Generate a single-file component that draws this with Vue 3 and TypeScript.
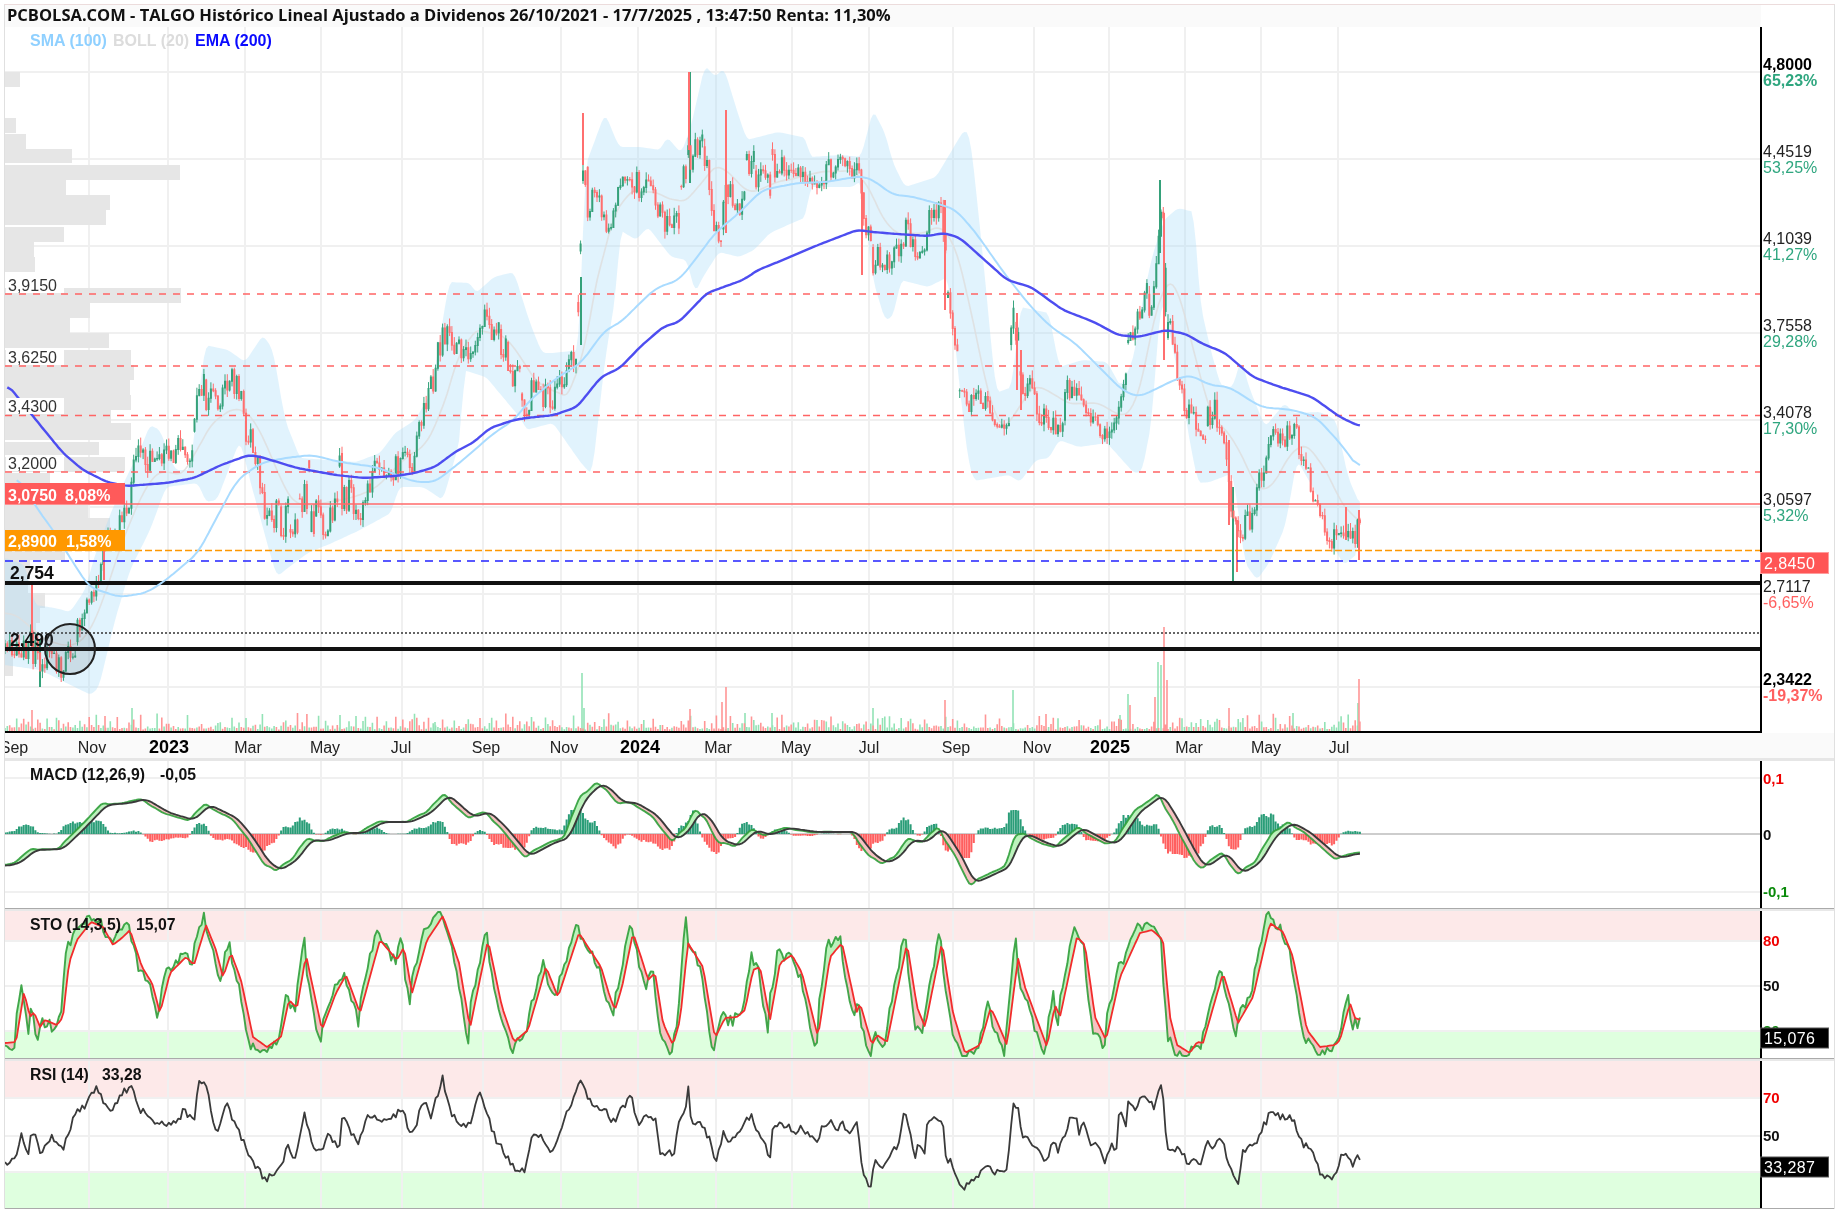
<script setup lang="ts">
type P = [number, number];
type Env = [number, number, number];

let seed = 20211026;
const rnd = (): number => {
  seed = (seed * 1664525 + 1013904223) >>> 0;
  return seed / 4294967296;
};
const sorted = <T extends number[]>(a: T[]): T[] => [...a].sort((p, q) => p[0] - q[0]);
const interp = (pts: P[], x: number): number => {
  if (x <= pts[0][0]) return pts[0][1];
  for (let i = 1; i < pts.length; i++) {
    if (x <= pts[i][0]) {
      const [x0, y0] = pts[i - 1];
      const [x1, y1] = pts[i];
      return y0 + ((y1 - y0) * (x - x0)) / Math.max(x1 - x0, 0.001);
    }
  }
  return pts[pts.length - 1][1];
};
const STEP = 2.34;
const END = 1361;
const xs: number[] = [];
for (let x = 5; x <= END; x += STEP) xs.push(+x.toFixed(2));
const smooth = (a: number[], w: number): number[] =>
  a.map((_, i) => {
    let s = 0;
    let n = 0;
    for (let j = Math.max(0, i - w); j <= Math.min(a.length - 1, i + w); j++) {
      s += a[j];
      n++;
    }
    return s / n;
  });
const path = (x: number[], y: number[]): string =>
  x.map((v, i) => `${i ? 'L' : 'M'}${v.toFixed(1)} ${y[i].toFixed(1)}`).join('');

/* ---------- grid ---------- */
const vGrid = [89, 168, 245, 321, 402, 483, 561, 638, 716, 792, 869, 953, 1034, 1109, 1185, 1261, 1338];
const hGrid = [72, 159, 246, 333, 420, 507, 594, 687];

/* ---------- price axis ---------- */
const axis = [
  { y: 72, p: '4,8000', c: '65,23%', bold: true, up: true },
  { y: 159, p: '4,4519', c: '53,25%', bold: false, up: true },
  { y: 246, p: '4,1039', c: '41,27%', bold: false, up: true },
  { y: 333, p: '3,7558', c: '29,28%', bold: false, up: true },
  { y: 420, p: '3,4078', c: '17,30%', bold: false, up: true },
  { y: 507, p: '3,0597', c: '5,32%', bold: false, up: true },
  { y: 594, p: '2,7117', c: '-6,65%', bold: false, up: false },
  { y: 687, p: '2,3422', c: '-19,37%', bold: true, up: false }
];
const months = [
  { x: 14, t: 'Sep' }, { x: 92, t: 'Nov' }, { x: 169, t: '2023', y: true }, { x: 248, t: 'Mar' },
  { x: 325, t: 'May' }, { x: 401, t: 'Jul' }, { x: 486, t: 'Sep' }, { x: 564, t: 'Nov' },
  { x: 640, t: '2024', y: true }, { x: 718, t: 'Mar' }, { x: 796, t: 'May' }, { x: 869, t: 'Jul' },
  { x: 956, t: 'Sep' }, { x: 1037, t: 'Nov' }, { x: 1110, t: '2025', y: true }, { x: 1189, t: 'Mar' },
  { x: 1266, t: 'May' }, { x: 1339, t: 'Jul' }
];

/* ---------- volume profile: top, bottom, right ---------- */
const profile: [number, number, number][] = [
  [72, 87, 20], [118, 133, 16], [134, 149, 26], [149, 163, 72], [165, 180, 180], [180, 195, 66],
  [195, 210, 110], [210, 225, 106], [227, 242, 64], [242, 257, 34], [257, 272, 35], [288, 303, 181],
  [303, 318, 90], [318, 333, 70], [333, 348, 109], [350, 365, 131], [365, 380, 134], [380, 395, 130],
  [395, 410, 131], [410, 423, 111], [423, 440, 131], [442, 455, 99], [457, 472, 125], [473, 483, 50],
  [505, 518, 88], [518, 530, 110], [545, 560, 65], [560, 578, 30], [578, 593, 28], [593, 608, 45],
  [608, 623, 40], [623, 640, 36], [640, 655, 20], [655, 676, 13]
];

/* ---------- price envelope ---------- */
const env: Env[] = [
  [6,640,665],[15,635,675],[25,620,660],[32,630,675],[40,640,687],[50,645,680],[63,650,682],[72,625,665],[79,605,650],
  [86,590,625],[91,570,600],[98,555,595],[104,530,565],[112,525,560],[122,495,540],[130,440,510],[134,440,480],[150,440,475],
  [165,445,470],[178,435,465],[186,432,470],[193,435,465],[197,380,425],[207,365,430],[218,375,425],[230,365,410],[240,375,420],
  [247,420,470],[255,430,480],[261,470,510],[269,490,545],[285,500,540],[300,485,535],[308,450,530],[316,490,540],[324,500,545],
  [332,480,525],[340,445,530],[348,470,520],[356,495,525],[362,505,520],[372,455,490],[385,450,490],[395,450,480],[405,445,490],
  [411,450,490],[416,420,470],[425,385,420],[432,370,410],[437,335,380],[445,302,360],[452,335,380],[462,333,365],[474,340,365],
  [486,290,340],[498,310,350],[510,340,385],[520,365,420],[526,385,425],[538,355,410],[547,375,410],[553,380,420],[565,360,395],
  [577,325,370],[583,150,195],[590,175,235],[597,195,225],[605,195,235],[612,195,240],[620,177,203],[632,150,193],[640,165,205],
  [652,160,187],[660,193,237],[671,220,240],[681,180,230],[688,125,183],[695,120,163],[703,127,160],[715,210,247],[722,200,250],
  [726,160,233],[735,203,217],[742,193,217],[746,143,190],[755,145,195],[766,177,237],[772,145,200],[778,143,173],[790,160,177],
  [806,170,183],[820,180,190],[824,160,185],[843,150,173],[853,170,180],[859,157,183],[862,183,203],[864,215,277],[873,223,280],
  [881,257,273],[893,247,270],[900,235,265],[907,190,237],[915,250,277],[924,250,273],[928,187,250],[932,205,235],[940,187,207],
  [945,200,290],[948,277,300],[956,327,360],[960,383,413],[976,390,413],[988,390,413],[996,413,427],[1005,427,443],[1009,397,427],
  [1012,293,323],[1017,313,350],[1021,350,393],[1035,387,413],[1047,407,440],[1059,407,440],[1069,373,417],[1077,367,393],[1091,407,423],
  [1104,423,443],[1114,423,433],[1120,363,413],[1126,343,387],[1132,323,347],[1142,287,327],[1154,270,323],[1160,205,253],[1164,213,280],
  [1168,290,360],[1177,360,380],[1185,380,427],[1193,407,437],[1203,437,460],[1209,393,437],[1221,400,437],[1229,440,510],[1233,490,580],
  [1237,527,563],[1247,497,533],[1253,505,530],[1257,470,507],[1265,450,470],[1271,427,447],[1285,427,457],[1293,410,450],[1304,447,467],
  [1312,477,503],[1320,500,520],[1328,520,550],[1336,527,550],[1346,507,537],[1352,530,550],[1359,510,560]
];
const spikes: [number, number, number, 'g' | 'r'][] = [
  [32,583,650,'r'],[40,640,687,'g'],[104,530,580,'r'],[581,277,345,'g'],[583,113,165,'r'],[689,72,150,'r'],[690,72,183,'g'],
  [726,110,233,'r'],[862,180,275,'r'],[945,200,310,'r'],[1017,313,390,'r'],[1021,350,410,'r'],[1160,180,253,'g'],[1164,213,360,'r'],
  [1229,440,525,'r'],[1233,487,583,'g'],[1237,520,572,'r'],[1346,507,540,'r'],[1359,510,560,'r']
];
const topPts: P[] = env.map((e) => [e[0], e[1]]);
const botPts: P[] = env.map((e) => [e[0], e[2]]);
let gBody = '', rBody = '', gWick = '', rWick = '';
let prevY = 650;
let prevF = 0.5;
xs.forEach((x) => {
  const t = interp(topPts, x);
  const b = interp(botPts, x);
  const f = 0.15 * prevF + 0.85 * rnd();
  const c = t + (b - t) * f;
  const o = Math.abs(prevY - c) > 30 ? t + (b - t) * rnd() : prevY;
  const hi = Math.min(o, c) - rnd() * 8;
  const lo = Math.max(o, c) + rnd() * 8;
  const bodyT = Math.min(o, c);
  const bodyB = Math.max(o, c) + 1;
  const up = c < o;
  const xx = x.toFixed(1);
  const w = `M${xx} ${hi.toFixed(1)}V${lo.toFixed(1)}`;
  const bd = `M${xx} ${bodyT.toFixed(1)}V${bodyB.toFixed(1)}`;
  if (up) { gWick += w; gBody += bd; } else { rWick += w; rBody += bd; }
  prevY = c;
  prevF = f;
});
spikes.forEach((s) => {
  const d = `M${s[0]} ${s[1]}V${s[2]}`;
  if (s[3] === 'g') gBody += d; else rBody += d;
});

/* ---------- Bollinger bands ---------- */
const upperPts: P[] = sorted<P>([
  [5,558],[25,565],[35,605],[55,608],[70,612],[85,590],[95,555],[110,515],[125,480],[140,450],[150,425],[160,430],[175,470],[190,470],
  [196,420],[205,345],[228,350],[245,362],[263,335],[273,350],[285,420],[300,458],[356,462],[380,453],[395,433],[415,420],[431,393],
  [449,282],[470,283],[476,293],[494,277],[514,272],[530,323],[542,353],[553,353],[579,350],[585,167],[605,113],[619,147],[640,147],
  [660,150],[667,137],[681,153],[690,130],[705,65],[715,77],[724,68],[739,117],[747,140],[778,132],[806,138],[810,157],[841,155],
  [861,157],[873,110],[885,133],[893,163],[905,187],[936,177],[964,130],[970,135],[980,227],[996,393],[1012,387],[1020,307],[1049,313],
  [1059,367],[1083,360],[1107,362],[1121,387],[1134,357],[1142,303],[1152,257],[1164,220],[1178,208],[1194,212],[1200,303],[1210,347],
  [1221,387],[1233,387],[1241,358],[1249,387],[1265,427],[1285,403],[1293,413],[1320,412],[1336,420],[1348,477],[1361,507]
]);
const lowerPts: P[] = sorted<P>([
  [5,665],[40,670],[91,695],[99,687],[115,620],[130,570],[150,530],[166,487],[198,483],[206,502],[217,500],[240,440],[250,480],
  [269,550],[277,577],[285,570],[308,553],[332,543],[360,530],[391,513],[399,487],[423,487],[443,500],[461,437],[463,370],[486,377],
  [522,420],[526,430],[553,423],[581,463],[592,475],[605,360],[616,293],[620,230],[636,240],[648,227],[671,257],[687,260],[695,293],
  [703,277],[719,252],[739,257],[754,250],[770,233],[806,217],[810,187],[853,187],[861,180],[873,280],[885,320],[893,317],[901,280],
  [928,287],[948,277],[960,390],[968,460],[974,481],[1009,475],[1020,482],[1036,460],[1049,458],[1059,440],[1079,447],[1107,443],
  [1134,473],[1142,472],[1152,420],[1156,360],[1162,293],[1172,345],[1182,393],[1190,443],[1198,483],[1210,482],[1233,473],[1245,563],
  [1257,580],[1269,563],[1285,527],[1297,460],[1316,493],[1328,537],[1344,565],[1358,553],[1361,510]
]);
const bx = xs;
const upper = smooth(bx.map((x) => interp(upperPts, x)), 1);
const lower = smooth(bx.map((x) => Math.max(interp(lowerPts, x), interp(upperPts, x) + 4)), 1);
const bandD =
  path(bx, upper) +
  [...bx].reverse().map((x, i) => `L${x.toFixed(1)} ${lower[bx.length - 1 - i].toFixed(1)}`).join('') + 'Z';
const midD = path(bx, smooth(upper.map((u, i) => (u + lower[i]) / 2), 6));

/* ---------- moving averages ---------- */
const smaPts: P[] = sorted<P>([
  [16,473],[36,507],[55,533],[67,553],[89,587],[119,597],[146,593],[166,580],[198,553],[217,517],[237,480],[261,463],[285,458],[312,455],
  [340,462],[376,467],[415,482],[435,482],[463,460],[494,433],[514,420],[530,400],[558,377],[581,363],[605,330],[620,323],[640,303],
  [656,288],[679,280],[695,260],[715,233],[739,213],[762,190],[798,183],[826,182],[861,176],[873,180],[893,195],[909,196],[936,203],
  [956,210],[976,233],[1004,273],[1031,307],[1051,327],[1075,343],[1122,390],[1138,397],[1154,390],[1174,380],[1190,375],[1210,385],
  [1229,387],[1261,407],[1293,410],[1316,417],[1340,443],[1360,470]
]);
const emaPts: P[] = sorted<P>([
  [6,383],[16,395],[36,420],[63,453],[83,470],[107,482],[127,486],[166,483],[194,478],[221,465],[249,455],[261,457],[297,468],[336,475],
  [364,478],[395,476],[415,473],[435,467],[455,452],[474,442],[490,428],[514,420],[526,418],[554,415],[577,407],[601,377],[620,368],
  [640,347],[663,327],[679,322],[707,293],[743,280],[758,270],[778,262],[818,245],[857,230],[873,232],[897,234],[928,236],[944,233],
  [960,238],[1007,280],[1031,287],[1063,310],[1094,322],[1118,335],[1138,337],[1166,330],[1186,334],[1201,343],[1225,353],[1253,377],
  [1277,386],[1312,397],[1340,417],[1361,427]
]);
const smaX = xs.filter((x) => x >= 16);
const smaD = path(smaX, smooth(smaX.map((x) => interp(smaPts, x)), 3));
const emaX = xs.filter((x) => x >= 6);
const emaD = path(emaX, smooth(emaX.map((x) => interp(emaPts, x)), 2));

/* ---------- volume ---------- */
let gVol = '', rVol = '';
xs.forEach((x) => {
  const r = rnd();
  const h = 1.5 + r * r * r * r * 14 + rnd() * 3;
  const d = `M${x.toFixed(1)} 731V${(731 - h).toFixed(1)}`;
  if (rnd() > 0.5) gVol += d; else rVol += d;
});
const volSpikes: [number, number, 'g' | 'r'][] = [
  [32,710,'r'],[105,716,'r'],[132,708,'g'],[340,715,'g'],[435,722,'g'],[582,673,'g'],[584,708,'g'],[690,709,'r'],[722,702,'r'],[726,687,'r'],
  [745,713,'g'],[772,713,'g'],[873,708,'g'],[945,700,'r'],[1013,690,'g'],[1046,714,'r'],[1120,715,'g'],[1128,694,'g'],[1130,705,'r'],
  [1155,697,'r'],[1158,662,'g'],[1161,665,'g'],[1164,627,'r'],[1167,680,'r'],[1229,708,'r'],[1293,713,'g'],[1358,703,'g'],[1359,679,'r']
];
volSpikes.forEach((s) => {
  const d = `M${s[0]} 731V${s[1]}`;
  if (s[2] === 'g') gVol += d; else rVol += d;
});

/* ---------- two-line filled oscillator helpers ---------- */
const fillBetween = (x: number[], a: number[], b: number[]): { g: string; r: string } => {
  let g = '', r = '';
  for (let i = 0; i < x.length - 1; i++) {
    const s = `M${x[i].toFixed(1)} ${a[i].toFixed(1)}L${x[i + 1].toFixed(1)} ${a[i + 1].toFixed(1)}L${x[i + 1].toFixed(1)} ${b[i + 1].toFixed(1)}L${x[i].toFixed(1)} ${b[i].toFixed(1)}Z`;
    if (a[i] + a[i + 1] < b[i] + b[i + 1]) g += s; else r += s;
  }
  return { g, r };
};

/* ---------- MACD ---------- */
const macdPts: P[] = sorted<P>([
  [6,866],[20,863],[36,850],[63,849],[83,830],[107,805],[130,803],[146,799],[170,813],[194,820],[210,805],[237,818],[253,837],[269,862],
  [281,870],[297,860],[312,840],[328,841],[348,833],[364,833],[384,822],[411,822],[431,813],[449,795],[474,817],[490,812],[506,827],
  [530,856],[554,843],[569,838],[585,800],[601,784],[610,788],[623,802],[637,803],[657,815],[677,840],[690,830],[700,812],[710,817],
  [723,840],[740,846],[757,830],[770,835],[790,828],[817,832],[857,832],[873,853],[887,863],[900,857],[913,840],[927,842],[943,828],
  [960,853],[975,883],[993,875],[1010,867],[1020,840],[1028,834],[1047,843],[1060,847],[1083,828],[1110,843],[1120,842],[1140,812],
  [1163,795],[1177,817],[1200,860],[1207,867],[1227,853],[1243,873],[1260,863],[1277,835],[1293,823],[1310,832],[1340,858],[1361,853]
]);
const macdB = smooth(xs.map((x) => interp(macdPts, x)), 2);
const macdG = xs.map((x) => {
  const f = interp(macdPts, Math.min(x + 4, END));
  const n = interp(macdPts, x);
  return f + (f - n) * 0.6 + (rnd() - 0.5) * 0.8;
});
const macdGS = smooth(macdG, 1);
const macdFill = fillBetween(xs, macdGS, macdB);
let macdHistG = '', macdHistR = '';
xs.forEach((x, i) => {
  const base = (macdB[i] - macdGS[i]) * 2.1 * (0.75 + rnd() * 0.25);
  const h = Math.max(-24, Math.min(24, base));
  const d = `M${x.toFixed(1)} 834V${(834 - h).toFixed(1)}`;
  if (h > 0) macdHistG += d; else macdHistR += d;
});
const macdBD = path(xs, macdB);
const macdGD = path(xs, macdGS);

/* ---------- STO ---------- */
const stoPts: P[] = sorted<P>([
  [6,1043],[16,1042],[24,992],[30,1017],[34,1012],[40,1027],[45,1020],[57,1025],[63,1017],[69,963],[77,940],[91,922],[103,927],[113,945],
  [123,937],[130,930],[142,967],[152,983],[160,1013],[170,973],[186,957],[194,965],[206,925],[216,950],[223,977],[231,953],[241,980],
  [253,1037],[267,1047],[281,1037],[289,1000],[297,1008],[306,955],[322,1030],[336,993],[346,975],[360,1013],[380,940],[397,960],[404,947],
  [412,993],[427,940],[443,916],[459,963],[470,1028],[488,940],[502,1007],[514,1042],[528,1030],[546,967],[558,997],[579,933],[601,967],
  [610,997],[615,1010],[622,987],[633,933],[643,963],[648,980],[655,973],[663,1023],[673,1045],[680,1020],[688,943],[703,967],[715,1038],
  [725,1018],[737,1017],[745,1010],[753,970],[760,967],[770,1020],[780,963],[792,955],[802,973],[818,1037],[830,957],[842,943],[857,1013],
  [860,1003],[872,1045],[877,1035],[887,1042],[907,943],[917,1007],[925,1027],[942,942],[953,1013],[965,1053],[980,1045],[990,1010],
  [993,1012],[1007,1045],[1018,958],[1025,987],[1047,1047],[1055,1005],[1060,1017],[1077,937],[1085,945],[1095,1017],[1106,1040],
  [1120,977],[1140,933],[1152,930],[1163,940],[1170,1017],[1177,1045],[1190,1053],[1197,1042],[1203,1043],[1223,973],[1238,1023],
  [1253,997],[1270,923],[1283,932],[1293,957],[1307,1030],[1320,1047],[1335,1045],[1340,1040],[1350,1003],[1355,1018],[1361,1020]
]);
const stoR = xs.map((x) => interp(stoPts, x));
const stoG = xs.map((x) => {
  const f = interp(stoPts, Math.min(x + 1.5, END));
  const n = interp(stoPts, x);
  const v = f + (f - n) * 1.6 + (rnd() - 0.5) * 8;
  return Math.max(912, Math.min(1056, v + (v < 960 ? -5 : v > 1020 ? 5 : 0)));
});
const stoFill = fillBetween(xs, stoG, stoR);
const stoRD = path(xs, stoR);
const stoGD = path(xs, stoG);

/* ---------- RSI ---------- */
const rsiPts: P[] = sorted<P>([
  [6,1162],[14,1160],[22,1133],[28,1155],[32,1128],[40,1152],[51,1138],[63,1150],[73,1118],[83,1107],[97,1087],[109,1113],[121,1093],
  [132,1085],[138,1108],[152,1120],[174,1125],[184,1110],[194,1123],[198,1085],[206,1083],[216,1132],[227,1105],[241,1137],[249,1155],
  [265,1181],[281,1168],[287,1143],[295,1160],[305,1113],[312,1143],[324,1153],[328,1130],[339,1152],[342,1115],[358,1143],[368,1117],
  [389,1122],[403,1107],[411,1138],[425,1098],[431,1115],[443,1078],[451,1117],[470,1127],[480,1092],[496,1140],[514,1167],[524,1172],
  [534,1130],[552,1152],[565,1115],[582,1080],[589,1100],[605,1110],[613,1123],[623,1107],[632,1095],[635,1113],[640,1127],[643,1117],
  [655,1117],[660,1158],[668,1152],[673,1158],[680,1120],[685,1115],[688,1080],[690,1120],[700,1122],[710,1140],[716,1163],[723,1133],
  [728,1145],[738,1135],[745,1118],[752,1118],[757,1128],[770,1157],[773,1122],[787,1125],[793,1133],[802,1128],[818,1143],[823,1123],
  [832,1122],[837,1130],[842,1117],[847,1135],[858,1117],[860,1160],[870,1192],[875,1160],[880,1170],[890,1153],[898,1147],[905,1107],
  [915,1158],[918,1143],[925,1150],[928,1117],[943,1118],[945,1158],[952,1163],[963,1190],[973,1182],[987,1162],[992,1173],[1007,1172],
  [1013,1102],[1018,1107],[1022,1138],[1037,1145],[1047,1163],[1053,1138],[1058,1155],[1068,1123],[1076,1112],[1079,1137],[1083,1122],
  [1090,1147],[1100,1145],[1105,1165],[1110,1145],[1117,1148],[1119,1108],[1127,1125],[1128,1100],[1135,1108],[1142,1097],[1155,1108],
  [1159,1085],[1163,1093],[1167,1147],[1180,1148],[1188,1165],[1193,1155],[1200,1168],[1207,1138],[1213,1147],[1222,1140],[1230,1167],
  [1237,1187],[1243,1152],[1257,1140],[1270,1113],[1280,1118],[1293,1118],[1303,1143],[1313,1153],[1320,1172],[1333,1182],[1337,1167],
  [1345,1150],[1353,1167],[1358,1150],[1361,1165]
]);
const rsiD = path(xs, xs.map((x) => interp(rsiPts, x) + (rnd() - 0.5) * 8));
</script>

<template>
  <div class="frame">
    <div class="title-row">
      <div class="title">PCBOLSA.COM - TALGO Histórico Lineal Ajustado a Dividenos 26/10/2021 - 17/7/2025 , 13:47:50 Renta: 11,30%</div>
    </div>

    <svg class="main" viewBox="5 27 1829 706" width="1829" height="706">
      <g class="grid">
        <line v-for="x in vGrid" :key="'v' + x" :x1="x" :x2="x" y1="27" y2="732" />
        <line v-for="y in hGrid" :key="'h' + y" x1="5" x2="1760" :y1="y" :y2="y" />
      </g>
      <rect v-for="(b, i) in profile" :key="'p' + i" class="profile" x="5" :y="b[0]" :width="b[2] - 5" :height="b[1] - b[0]" />
      <path class="band" :d="bandD" />
      <path class="mid" :d="midD" />
      <path class="vol-g" :d="gVol" />
      <path class="vol-r" :d="rVol" />
      <path class="wick-g" :d="gWick" />
      <path class="wick-r" :d="rWick" />
      <path class="body-g" :d="gBody" />
      <path class="body-r" :d="rBody" />

      <line class="dash-red" x1="5" x2="1760" y1="294" y2="294" />
      <line class="dash-red" x1="5" x2="1760" y1="366" y2="366" />
      <line class="dash-red" x1="5" x2="1760" y1="415.5" y2="415.5" />
      <line class="dash-red" x1="5" x2="1760" y1="472" y2="472" />
      <line class="solid-red" x1="5" x2="1760" y1="504" y2="504" />
      <line class="dash-orange" x1="5" x2="1760" y1="550.5" y2="550.5" />
      <line class="dash-blue" x1="5" x2="1760" y1="561" y2="561" />
      <line class="thick" x1="5" x2="1760" y1="583" y2="583" />
      <line class="dotted" x1="5" x2="1760" y1="633" y2="633" />
      <line class="thick" x1="5" x2="1760" y1="649" y2="649" />

      <path class="sma" :d="smaD" />
      <path class="ema" :d="emaD" />

      <g class="left-label">
        <rect class="plate" x="6" y="277" width="58" height="16" />
        <text x="8" y="291">3,9150</text>
        <rect class="plate" x="6" y="349" width="58" height="16" />
        <text x="8" y="363">3,6250</text>
        <rect class="plate" x="6" y="398" width="58" height="16" />
        <text x="8" y="412">3,4300</text>
        <rect class="plate" x="6" y="455" width="58" height="16" />
        <text x="8" y="469">3,2000</text>
      </g>
      <rect class="tag-red" x="5" y="483" width="120" height="21" />
      <text class="tag-text" x="8" y="501">3,0750</text>
      <text class="tag-text" x="65" y="501">8,08%</text>
      <rect class="tag-orange" x="5" y="530" width="120" height="21" />
      <text class="tag-text" x="8" y="547">2,8900</text>
      <text class="tag-text" x="66" y="547">1,58%</text>
      <text class="line-label" x="10" y="579">2,754</text>
      <text class="line-label" x="10" y="646">2,490</text>
      <circle class="marker" cx="70" cy="649" r="25" />

      <text class="legend sma-t" x="30" y="46">SMA (100)</text>
      <text class="legend boll-t" x="113" y="46">BOLL (20)</text>
      <text class="legend ema-t" x="195" y="46">EMA (200)</text>

      <line class="axis-line" x1="1761" x2="1761" y1="27" y2="733" />
      <line class="axis-line" x1="5" x2="1762" y1="732" y2="732" />
      <g v-for="a in axis" :key="a.p">
        <text class="ax-price" :class="{ b: a.bold }" x="1763" :y="a.y - 2">{{ a.p }}</text>
        <text class="ax-pct" :class="[{ b: a.bold }, a.up ? 'up' : 'down']" x="1763" :y="a.y + 13.5">{{ a.c }}</text>
      </g>
      <rect class="last-tag" x="1760.5" y="552.5" width="68" height="21" />
      <text class="box-text" x="1764" y="569">2,8450</text>
    </svg>

    <svg class="strip" viewBox="5 733 1829 25" width="1829" height="25">
      <template v-for="m in months" :key="m.t + m.x">
        <text :class="m.y ? 'year' : 'month'" :x="m.x" y="753">{{ m.t }}</text>
      </template>
    </svg>

    <svg class="panel" viewBox="5 761 1829 147" width="1829" height="147">
      <g class="grid">
        <line v-for="x in vGrid" :key="'v' + x" :x1="x" :x2="x" y1="761" y2="908" />
        <line x1="5" x2="1760" y1="778" y2="778" />
        <line x1="5" x2="1760" y1="892" y2="892" />
      </g>
      <line class="zero" x1="5" x2="1760" y1="834" y2="834" />
      <path class="hist-g" :d="macdHistG" />
      <path class="hist-r" :d="macdHistR" />
      <path class="fill-g" :d="macdFill.g" />
      <path class="fill-r" :d="macdFill.r" />
      <path class="line-green" :d="macdGD" />
      <path class="line-black" :d="macdBD" />
      <text class="ind-label" x="30" y="780">MACD (12,26,9)</text>
      <text class="ind-label" x="160" y="780">-0,05</text>
      <line class="axis-line" x1="1761" x2="1761" y1="761" y2="908" />
      <text class="tick red" x="1763" y="784">0,1</text>
      <text class="tick" x="1763" y="840">0</text>
      <text class="tick green" x="1763" y="897">-0,1</text>
    </svg>
    <div class="sep"></div>

    <svg class="panel" viewBox="5 911 1829 147" width="1829" height="147">
      <rect class="zone-red" x="5" y="911" width="1755" height="30" />
      <rect class="zone-green" x="5" y="1031" width="1755" height="27" />
      <g class="grid">
        <line v-for="x in vGrid" :key="'v' + x" :x1="x" :x2="x" y1="911" y2="1058" />
        <line x1="5" x2="1760" y1="941" y2="941" />
        <line x1="5" x2="1760" y1="986" y2="986" />
        <line x1="5" x2="1760" y1="1031" y2="1031" />
      </g>
      <path class="fill-g" :d="stoFill.g" />
      <path class="fill-r" :d="stoFill.r" />
      <path class="line-green" :d="stoGD" />
      <path class="line-red" :d="stoRD" />
      <text class="ind-label" x="30" y="930">STO (14,3,5)</text>
      <text class="ind-label" x="136" y="930">15,07</text>
      <line class="axis-line" x1="1761" x2="1761" y1="911" y2="1058" />
      <text class="tick red" x="1763" y="946">80</text>
      <text class="tick" x="1763" y="991">50</text>
      <text class="tick green" x="1763" y="1036">20</text>
      <rect class="black-tag" x="1760.5" y="1028" width="68" height="20" />
      <text class="box-text" x="1764" y="1044">15,076</text>
    </svg>
    <div class="sep"></div>

    <svg class="panel" viewBox="5 1061 1829 147" width="1829" height="147">
      <rect class="zone-red" x="5" y="1061" width="1755" height="37" />
      <rect class="zone-green" x="5" y="1172" width="1755" height="36" />
      <g class="grid">
        <line v-for="x in vGrid" :key="'v' + x" :x1="x" :x2="x" y1="1061" y2="1208" />
        <line x1="5" x2="1760" y1="1098" y2="1098" />
        <line x1="5" x2="1760" y1="1136" y2="1136" />
        <line x1="5" x2="1760" y1="1172" y2="1172" />
      </g>
      <path class="line-rsi" :d="rsiD" />
      <text class="ind-label" x="30" y="1080">RSI (14)</text>
      <text class="ind-label" x="102" y="1080">33,28</text>
      <line class="axis-line" x1="1761" x2="1761" y1="1061" y2="1208" />
      <text class="tick red" x="1763" y="1103">70</text>
      <text class="tick" x="1763" y="1141">50</text>
      <rect class="black-tag" x="1760.5" y="1157" width="68" height="20" />
      <text class="box-text" x="1764" y="1173">33,287</text>
    </svg>
  </div>
</template>

<style scoped>
.frame {
  width: 1831px;
  box-sizing: border-box;
  margin: 4px 0 0 4px;
  border: 1px solid #e0e0e0;
  border-top-color: #ecdcdc;
  display: flex;
  flex-direction: column;
  background: #fff;
  filter: blur(0.35px);
}
.frame svg {
  display: block;
  flex: none;
}
.title-row {
  height: 22px;
  background: #fff;
}
.title {
  width: 1756px;
  height: 22px;
  box-sizing: border-box;
  padding-left: 2px;
  background: #fafafa;
  font: 700 16.5px/20px "Open Sans", "Noto Sans", sans-serif;
  color: #111;
  white-space: nowrap;
}
text {
  font-family: "Liberation Sans", Arial, sans-serif;
  font-size: 16px;
}
.grid line {
  stroke: #f0f0f0;
  stroke-width: 2;
}
.profile {
  fill: #e6e6e6;
}
.band {
  fill: rgba(170, 220, 250, 0.35);
}
.mid {
  fill: none;
  stroke: #dedede;
  stroke-width: 1.6;
  opacity: 0.85;
}
.vol-g, .vol-r, .wick-g, .wick-r, .body-g, .body-r {
  fill: none;
}
.vol-g { stroke: #93e3b6; stroke-width: 1.6; }
.vol-r { stroke: #ff9696; stroke-width: 1.6; }
.wick-g { stroke: #3aa57f; stroke-width: 1; }
.wick-r { stroke: #ff6f6f; stroke-width: 1; }
.body-g { stroke: #35a17a; stroke-width: 2; }
.body-r { stroke: #ff6f6f; stroke-width: 2; }
.dash-red { stroke: #ff6464; stroke-width: 1.5; stroke-dasharray: 7 7; }
.solid-red { stroke: #ff6a6a; stroke-width: 1.6; }
.dash-orange { stroke: #ff9800; stroke-width: 1.6; stroke-dasharray: 7 3; }
.dash-blue { stroke: #2222ff; stroke-width: 1.5; stroke-dasharray: 8 6; }
.thick { stroke: #111; stroke-width: 4.2; }
.dotted { stroke: #333; stroke-width: 1.5; stroke-dasharray: 2 2; }
.sma { fill: none; stroke: #a9dbff; stroke-width: 2; stroke-linejoin: round; }
.ema { fill: none; stroke: #4d4df0; stroke-width: 2.4; stroke-linejoin: round; }
.plate { fill: #fff; }
.left-label text { fill: #333; }
.tag-red { fill: #ff5a5a; }
.tag-orange { fill: #ff9800; }
.tag-text { fill: #fff; font-weight: 700; }
.line-label { font-size: 17.5px; font-weight: 700; fill: #111; }
.marker { fill: rgba(90, 100, 110, 0.16); stroke: #222; stroke-width: 2; }
.legend { font-weight: 700; }
.sma-t { fill: #8fd0ff; }
.boll-t { fill: #dcdcdc; }
.ema-t { fill: #0a0aff; }
.axis-line { stroke: #000; stroke-width: 2; }
.ax-price { fill: #222; }
.ax-pct.up { fill: #2fa67f; }
.ax-pct.down { fill: #ff6060; }
.b { font-weight: 700; }
.ax-price.b { fill: #000; }
.last-tag { fill: #ff5555; stroke: #ff9c9c; stroke-width: 1; }
.black-tag { fill: #000; stroke: #555; stroke-width: 1; }
.box-text { fill: #fff; font-size: 16px; letter-spacing: 0.4px; }
.strip {
  background: #fafafa;
  height: 25px;
}
.month { font-size: 16px; fill: #222; text-anchor: middle; }
.year { font-size: 18px; font-weight: 700; fill: #000; text-anchor: middle; }
.panel { background: #fff; }
.strip + .panel {
  margin-top: 3px;
}
.frame > .strip {
  box-shadow: 0 3px 0 #e6e6e6;
}
.sep {
  height: 3px;
  box-sizing: border-box;
  border-top: 1px solid #aaa;
  background: #e8e8e8;
}
.panel:last-child {
  box-shadow: 0 1px 0 #aaa;
}
.zero { stroke: #bdbdbd; stroke-width: 1.6; }
.hist-g { fill: none; stroke: #2a9d78; stroke-width: 2; }
.hist-r { fill: none; stroke: #ff5f5f; stroke-width: 2; }
.fill-g { fill: #bcf2bc; stroke: none; }
.fill-r { fill: #f6c2c2; stroke: none; }
.line-green { fill: none; stroke: #2f9e3a; stroke-width: 1.9; stroke-linejoin: round; opacity: 0.9; }
.line-black { fill: none; stroke: #3a3a3a; stroke-width: 1.9; stroke-linejoin: round; }
.line-red { fill: none; stroke: #f22c2c; stroke-width: 1.8; stroke-linejoin: round; }
.line-rsi { fill: none; stroke: #3a3a3a; stroke-width: 1.8; stroke-linejoin: round; }
.zone-red { fill: #fde9e9; }
.zone-green { fill: #dfffdf; }
.ind-label { font-size: 15.8px; font-weight: 700; fill: #111; }
.tick { font-size: 15px; font-weight: 700; fill: #111; }
.tick.red { fill: #f00000; }
.tick.green { fill: #0a8a0a; }
</style>
